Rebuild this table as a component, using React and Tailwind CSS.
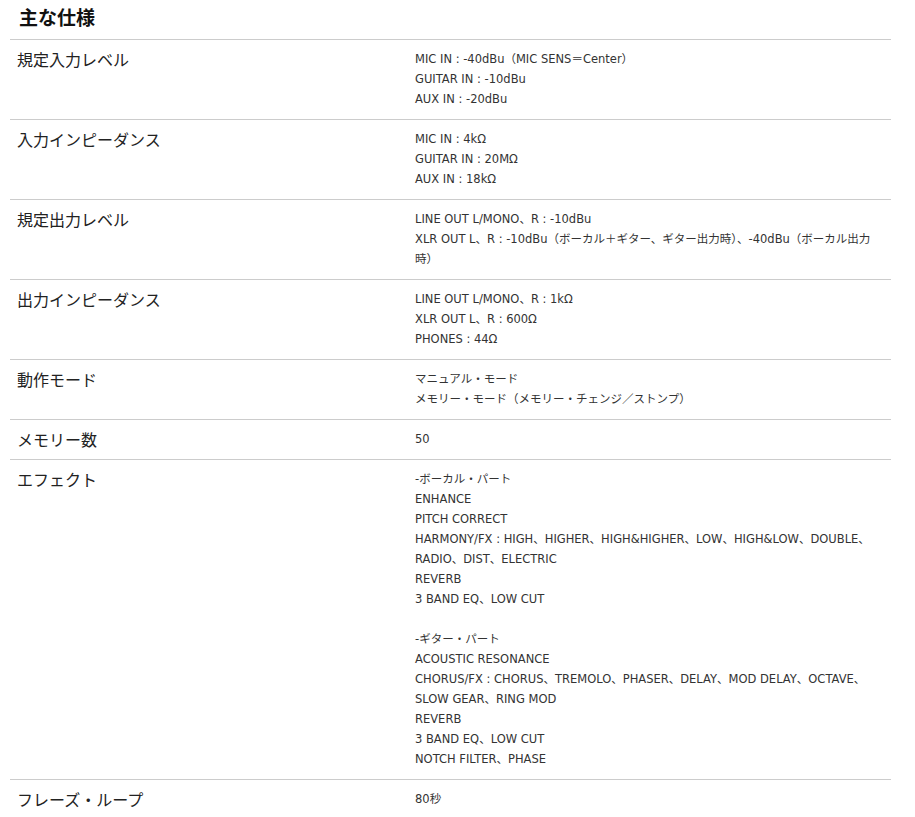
import React from 'react';

const specs = [
  {
    label: '規定入力レベル',
    lines: ['MIC IN : -40dBu（MIC SENS＝Center）', 'GUITAR IN : -10dBu', 'AUX IN : -20dBu'],
  },
  {
    label: '入力インピーダンス',
    lines: ['MIC IN : 4kΩ', 'GUITAR IN : 20MΩ', 'AUX IN : 18kΩ'],
  },
  {
    label: '規定出力レベル',
    lines: [
      'LINE OUT L/MONO、R : -10dBu',
      'XLR OUT L、R : -10dBu（ボーカル＋ギター、ギター出力時）、-40dBu（ボーカル出力時）',
    ],
  },
  {
    label: '出力インピーダンス',
    lines: ['LINE OUT L/MONO、R : 1kΩ', 'XLR OUT L、R : 600Ω', 'PHONES : 44Ω'],
  },
  {
    label: '動作モード',
    lines: ['マニュアル・モード', 'メモリー・モード（メモリー・チェンジ／ストンプ）'],
  },
  { label: 'メモリー数', lines: ['50'] },
  {
    label: 'エフェクト',
    lines: [
      '-ボーカル・パート',
      'ENHANCE',
      'PITCH CORRECT',
      'HARMONY/FX : HIGH、HIGHER、HIGH&HIGHER、LOW、HIGH&LOW、DOUBLE、RADIO、DIST、ELECTRIC',
      'REVERB',
      '3 BAND EQ、LOW CUT',
      '',
      '-ギター・パート',
      'ACOUSTIC RESONANCE',
      'CHORUS/FX : CHORUS、TREMOLO、PHASER、DELAY、MOD DELAY、OCTAVE、SLOW GEAR、RING MOD',
      'REVERB',
      '3 BAND EQ、LOW CUT',
      'NOTCH FILTER、PHASE',
    ],
  },
  { label: 'フレーズ・ループ', lines: ['80秒'] },
];

const jp = { fontFamily: '"Noto Sans CJK JP", "Noto Sans", sans-serif' };
const val = { fontFamily: '"DejaVu Sans", "Noto Sans CJK JP", sans-serif' };

const App = () => {
  return (
    <div className="min-h-screen bg-white" style={jp}>
      <div className="ml-[10px] w-[881px]">
        <h2 className="pl-[9px] pt-[5px] pb-[10px] text-[19px] font-bold leading-[24px] text-[#111] border-b border-[#cccccc]">
          主な仕様
        </h2>
        {specs.map((s) => (
          <div key={s.label} className="flex border-b border-[#cccccc] pt-[9px] pb-[10px]">
            <div className="w-[405px] shrink-0 pl-[7px] text-[16px] leading-[20px] text-[#222]">
              {s.label}
            </div>
            <div className="flex-1 pr-[12px] text-[11.5px] leading-[20px] text-[#333]" style={val}>
              {s.lines.map((l, i) => (
                <div key={i} className="h-[20px] min-h-[20px] [&:not(:empty)]:h-auto">{l}</div>
              ))}
            </div>
          </div>
        ))}
      </div>
    </div>
  );
};

export default App;
